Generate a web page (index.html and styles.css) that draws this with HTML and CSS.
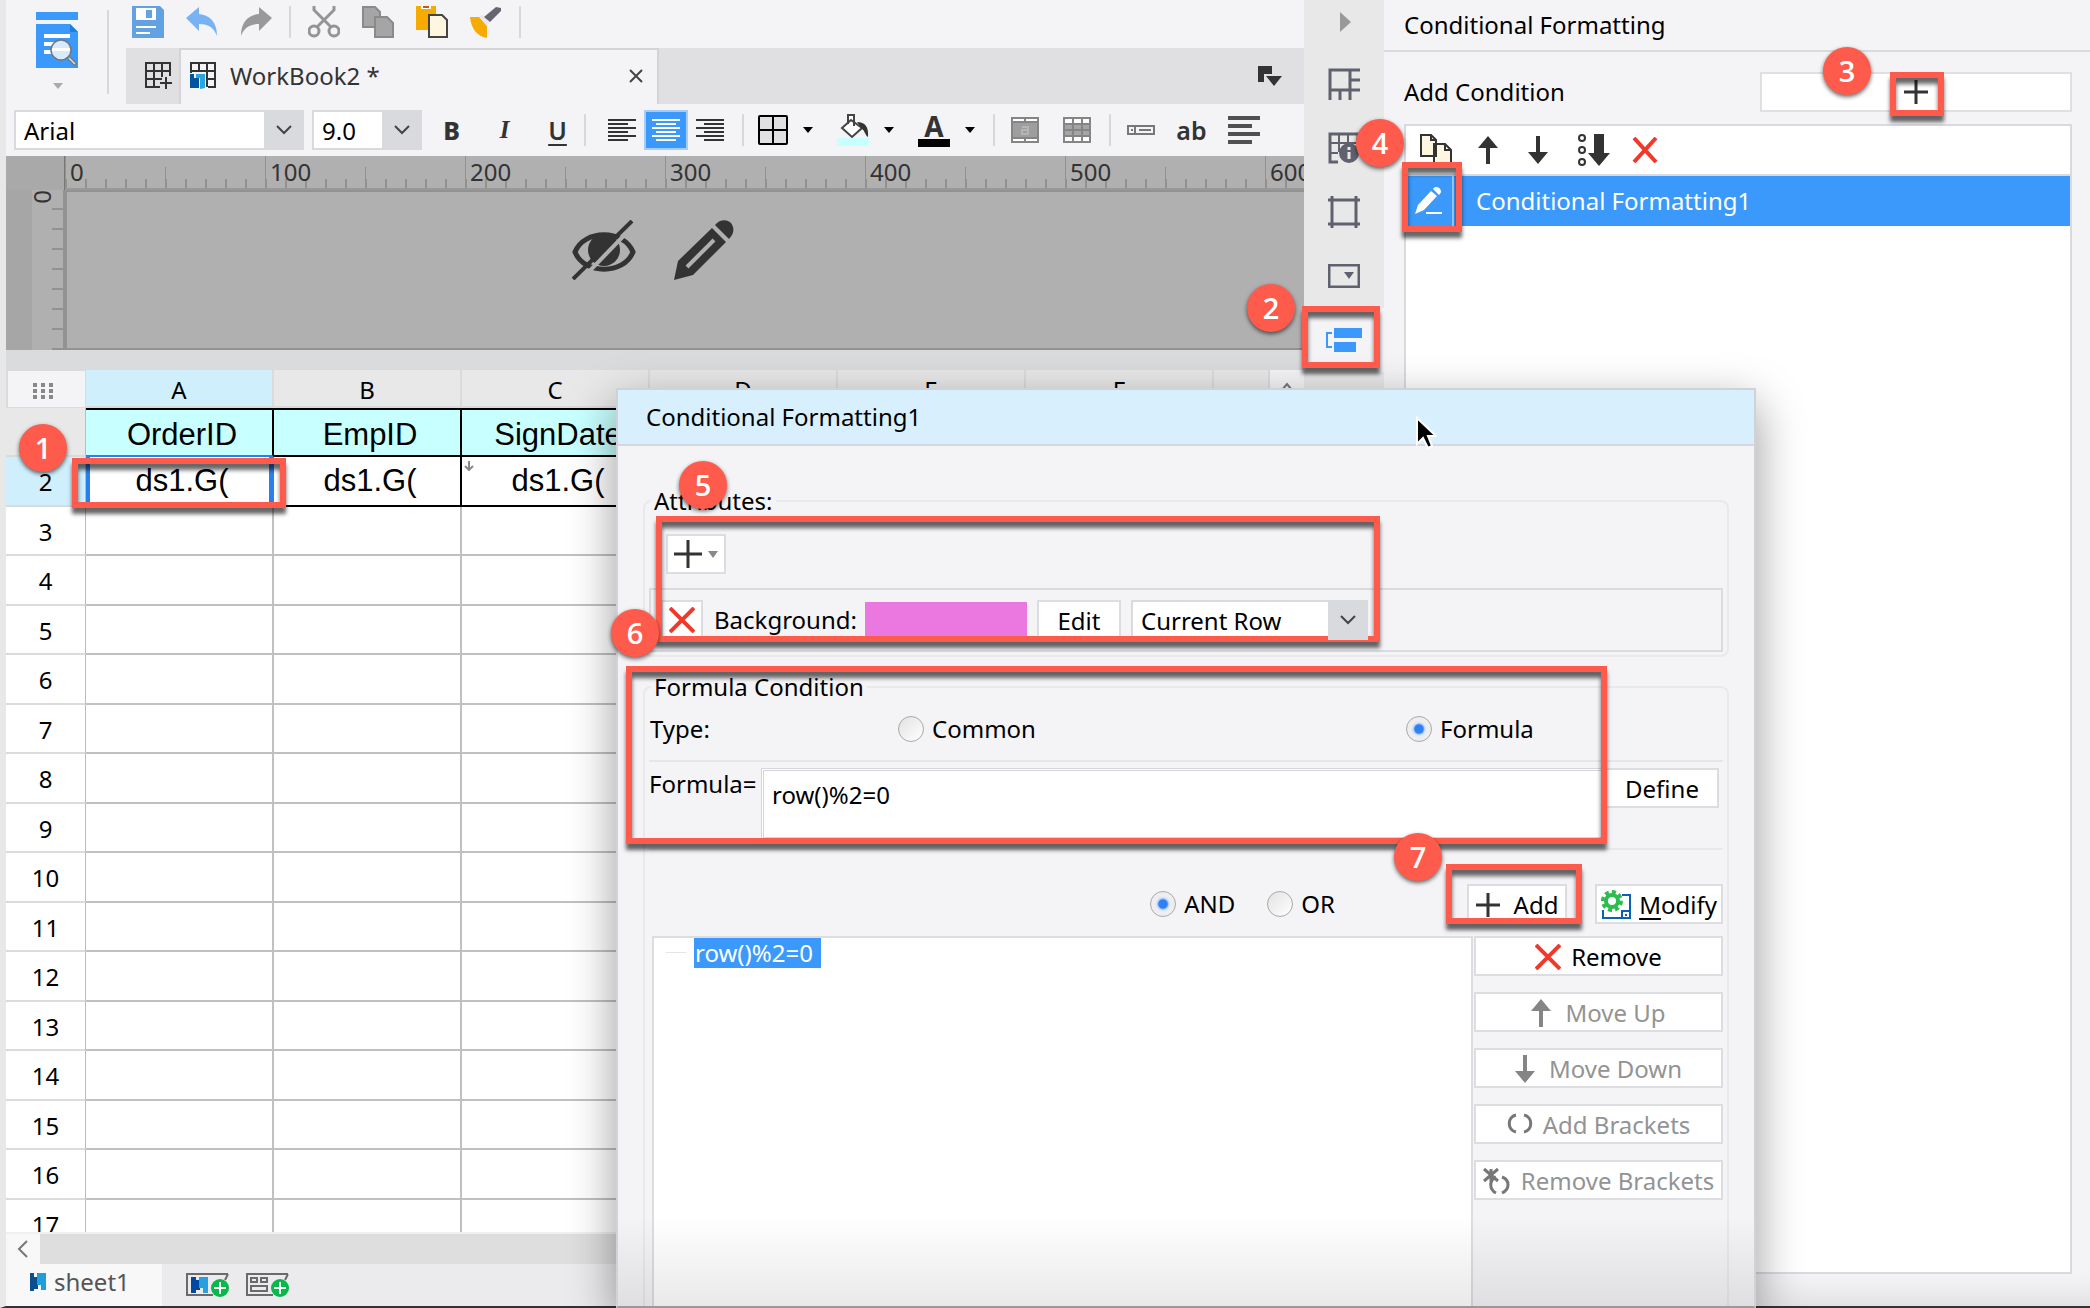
FILE: index.html
```html
<!DOCTYPE html>
<html lang="en">
<head>
<meta charset="utf-8">
<title>WorkBook2 - Conditional Formatting</title>
<link rel="stylesheet" href="styles.css">
</head>
<body>
<div class="app">
  <main class="designer">
    <header class="toolbar">
      <button class="preview" aria-label="Preview">
        <svg width="42" height="78" viewBox="0 0 42 78"><path fill="#3b99fc" d="M0 0h42v8H0zM0 12h34l8 8v36H0z"/><path fill="#1c7fe0" d="M34 12l8 8h-8z"/><path fill="#fff" d="M8 22h26v4H8zM8 30h12v4H8zM8 38h12v4H8z"/><circle cx="25" cy="38" r="10" fill="#d8eafd" stroke="#777" stroke-width="1.5"/><path d="M16 36h18v3H16z" fill="#fff"/><path stroke="#777" stroke-width="4" d="M33 46l7 7"/><path stroke="#ddd" stroke-width="1.5" d="M33 46l6 6"/><path fill="#aaa" d="M17 71h10l-5 6z"/></svg>
      </button>
      <span class="rule rule-tall"></span>
      <div class="toolbar-main">
        <div class="quick">
          <button aria-label="Save"><svg width="32" height="32"><path fill="#62a1e2" d="M0 0h28l4 4v28H0z"/><path fill="#fff" d="M4 2h20v12H4zM4 20h20v2H4zM4 26h14v2H4z"/><path fill="#62a1e2" d="M14 4h6v8h-6z"/></svg></button>
          <button aria-label="Undo"><svg width="32" height="32"><path fill="#78b2f2" d="M0 12L13 1v7c11 1 18 8 18 22-3-8-8-12-18-12v7z"/></svg></button>
          <button aria-label="Redo"><svg width="32" height="32"><path fill="#999" d="M32 12L19 1v7C8 9 1 16 1 30c3-8 8-12 18-12v7z"/></svg></button>
          <span class="rule"></span>
          <button aria-label="Cut"><svg width="32" height="32" fill="none" stroke="#949494" stroke-width="3"><circle cx="6" cy="25" r="5"/><circle cx="26" cy="25" r="5"/><path d="M6 0v4l17 17M26 0v4L9 21"/></svg></button>
          <button aria-label="Copy"><svg width="32" height="32"><path fill="#a5a5a5" stroke="#8a8a8a" stroke-width="2" d="M1 1h12l5 5v15H1z"/><path fill="#a5a5a5" stroke="#8a8a8a" stroke-width="2" d="M13 11h12l6 6v14H13z"/></svg></button>
          <button aria-label="Paste"><svg width="32" height="32"><path fill="#f7ab00" d="M0 0h20v24H0z"/><path fill="#fff" d="M5 0h10v3H5z"/><path fill="#c55a11" d="M7 0h6v2H7z"/><path fill="#fff6e0" stroke="#444" stroke-width="2" d="M13 9h13l5 5v17H13z"/></svg></button>
          <button aria-label="Format painter"><svg width="32" height="32"><path fill="#f7ab00" d="M0 11h9l8 9v12c-9-1-16-9-17-21z"/><path fill="#e9e9ec" d="M9 10l4-1 7 8-3 3z"/><path fill="#666673" d="M14 11L26 1l5 1v3L20 16z"/></svg></button>
          <span class="rule"></span>
        </div>
        <nav class="tabs">
          <button class="new-tab" aria-label="New workbook"><svg width="28" height="28" fill="none" stroke="#333" stroke-width="2"><path d="M25 14V1H1v24h14M1 9h24M1 17h16M9 1v24M17 1v14M21 15v12M15 21h12"/></svg></button>
          <a class="tab" href="#workbook2">
            <svg width="28" height="28"><path fill="none" stroke="#333" stroke-width="2" d="M1 11V1h24v24h-7M1 9h24M9 1v9M17 1v24M17 17h8"/><path fill="#0054a0" d="M0 12h4v4h5v10H0z"/><path fill="#2aa5e0" d="M6 12h9v14l-5 1V16H6z"/></svg>
            <span>WorkBook2 *</span>
            <svg class="tab-close" width="16" height="16" stroke="#444" stroke-width="2"><path d="M2 2l12 12M14 2L2 14"/></svg>
          </a>
          <div class="tab-rest"><button aria-label="Tab list"><svg width="24" height="20" fill="#333"><path d="M0 0h14v8H6v8H0zM8 10h16l-8 10z"/></svg></button></div>
        </nav>
      </div>
    </header>

    <div class="format">
      <label class="combo combo-font"><select aria-label="Font"><option>Arial</option></select><span class="chev"><svg width="16" height="10" fill="none" stroke="#444" stroke-width="2"><path d="M1 1l7 7 7-7"/></svg></span></label>
      <label class="combo combo-size"><select aria-label="Font size"><option>9.0</option></select><span class="chev"><svg width="16" height="10" fill="none" stroke="#444" stroke-width="2"><path d="M1 1l7 7 7-7"/></svg></span></label>
      <button class="glyph bold">B</button>
      <button class="glyph italic">I</button>
      <button class="glyph under">U</button>
      <span class="rule"></span>
      <div class="aligns">
        <button aria-label="Align left"><svg width="28" height="22" fill="#333"><path d="M0 0h28v2H0zM0 4h20v2H0zM0 8h28v2H0zM0 12h20v2H0zM0 16h28v2H0zM0 20h20v2H0z"/></svg></button>
        <button class="on" aria-label="Align center"><svg width="28" height="22" fill="#fff"><path d="M0 0h28v2H0zM4 4h20v2H4zM0 8h28v2H0zM4 12h20v2H4zM0 16h28v2H0zM4 20h20v2H4z"/></svg></button>
        <button aria-label="Align right"><svg width="28" height="22" fill="#333"><path d="M0 0h28v2H0zM8 4h20v2H8zM0 8h28v2H0zM8 12h20v2H8zM0 16h28v2H0zM8 20h20v2H8z"/></svg></button>
      </div>
      <span class="rule"></span>
      <div class="pickers">
        <button aria-label="Border"><svg width="30" height="30"><rect x="1" y="1" width="28" height="28" rx="1" fill="#e0e0e2" stroke="#000" stroke-width="2"/><path stroke="#000" stroke-width="2" d="M15 1v28M1 15h28"/></svg><svg class="caret" width="10" height="6"><path d="M0 0h10L5 6z"/></svg></button>
        <button aria-label="Fill color"><svg width="32" height="32"><path fill="#c8ffff" d="M0 24h32v8H0z"/><path fill="#fff" stroke="#444" stroke-width="2" d="M14 6l11 8-10 9-10-9zM11 10V1h6v11"/><path fill="#333" d="M20 8c8 0 12 5 11 15-3-2-3-6-6-8z"/></svg><svg class="caret" width="10" height="6"><path d="M0 0h10L5 6z"/></svg></button>
        <button aria-label="Font color"><span class="font-color">A</span><svg class="caret" width="10" height="6"><path d="M0 0h10L5 6z"/></svg></button>
      </div>
      <span class="rule"></span>
      <div class="cells">
        <button aria-label="Merge cells"><svg width="28" height="26"><path fill="#858585" d="M0 0h28v26H0z"/><path fill="#fff" d="M2 2h11v2H2zM15 2h11v2H15zM2 22h11v2H2zM15 22h11v2H15z"/><path fill="#9e9e9e" d="M2 6h24v14H2z"/><path d="M11 10h6v7h-6v-4h5" fill="none" stroke="#b5b5b5" stroke-width="2"/></svg></button>
        <button aria-label="Split cells"><svg width="28" height="26"><path fill="#858585" d="M0 0h28v26H0z"/><path fill="#fff" d="M2 2h7v4H2zM11 2h7v4h-7zM20 2h6v4h-6zM2 20h7v4H2zM11 20h7v4h-7zM20 20h6v4h-6z"/><path fill="#a5a5a5" d="M2 8h7v4H2zM11 8h7v4h-7zM20 8h6v4h-6zM2 14h7v4H2zM11 14h7v4h-7zM20 14h6v4h-6z"/></svg></button>
      </div>
      <span class="rule"></span>
      <div class="extras">
        <button aria-label="Text field"><svg width="28" height="10" fill="none" stroke="#777" stroke-width="2"><path d="M1 1h26v8H1zM8 1v8M12 5h12M4 5h2"/></svg></button>
        <button class="glyph ab">ab</button>
        <button aria-label="Paragraph"><svg width="32" height="28" fill="#505050"><path d="M0 0h32v4H0zM0 8h24v4H0zM0 16h32v4H0zM0 24h24v4H0z"/></svg></button>
      </div>
    </div>

    <section class="canvas">
      <div class="ruler-corner"></div>
      <div class="ruler-x"><span>0</span><span>100</span><span>200</span><span>300</span><span>400</span><span>500</span><span>600</span></div>
      <div class="ruler-y"><span>0</span></div>
      <div class="stage">
        <svg width="64" height="60" viewBox="0 0 64 60"><path fill="none" stroke="#333" stroke-width="5" d="M3 32C12 9 52 9 61 32 52 55 12 55 3 32z"/><circle cx="32" cy="30" r="16" fill="#333"/><path fill="none" stroke="#b0b0b0" stroke-width="4" d="M64 3L6 63"/><path fill="none" stroke="#333" stroke-width="4" d="M60 1L1 59"/></svg>
        <svg width="60" height="60" viewBox="0 0 60 60"><path fill="#333" d="M0 60l4-19L38 8l14 14-33 33zM41 5c6-7 13-5 16-2 3 4 4 10-2 16z"/><path stroke="#b0b0b0" stroke-width="4" d="M13 47l27-27"/></svg>
      </div>
    </section>

    <section class="sheet">
      <table class="grid">
        <thead><tr><th class="corner"><svg width="22" height="16" fill="#888"><path d="M0 0h4v4H0zM8 0h4v4H8zM16 0h4v4h-4zM0 6h4v4H0zM8 6h4v4H8zM16 6h4v4h-4zM0 12h4v4H0zM8 12h4v4H8zM16 12h4v4h-4z"/></svg></th><th class="active">A</th><th>B</th><th>C</th><th>D</th><th>E</th><th>F</th><th></th></tr></thead>
        <tbody>
          <tr class="head"><th></th><td>OrderID</td><td>EmpID</td><td>SignDate</td><td></td><td></td><td></td><td></td></tr>
          <tr class="data"><th class="active">2</th><td class="selected">ds1.G(</td><td>ds1.G(</td><td class="expand">ds1.G(<svg width="10" height="10" fill="none" stroke="#888" stroke-width="2"><path d="M5 0v8M1 5l4 4 4-4"/></svg></td><td></td><td></td><td></td><td></td></tr>
          <tr><th>3</th><td></td><td></td><td></td><td></td><td></td><td></td><td></td></tr>
          <tr><th>4</th><td></td><td></td><td></td><td></td><td></td><td></td><td></td></tr>
          <tr><th>5</th><td></td><td></td><td></td><td></td><td></td><td></td><td></td></tr>
          <tr><th>6</th><td></td><td></td><td></td><td></td><td></td><td></td><td></td></tr>
          <tr><th>7</th><td></td><td></td><td></td><td></td><td></td><td></td><td></td></tr>
          <tr><th>8</th><td></td><td></td><td></td><td></td><td></td><td></td><td></td></tr>
          <tr><th>9</th><td></td><td></td><td></td><td></td><td></td><td></td><td></td></tr>
          <tr><th>10</th><td></td><td></td><td></td><td></td><td></td><td></td><td></td></tr>
          <tr><th>11</th><td></td><td></td><td></td><td></td><td></td><td></td><td></td></tr>
          <tr><th>12</th><td></td><td></td><td></td><td></td><td></td><td></td><td></td></tr>
          <tr><th>13</th><td></td><td></td><td></td><td></td><td></td><td></td><td></td></tr>
          <tr><th>14</th><td></td><td></td><td></td><td></td><td></td><td></td><td></td></tr>
          <tr><th>15</th><td></td><td></td><td></td><td></td><td></td><td></td><td></td></tr>
          <tr><th>16</th><td></td><td></td><td></td><td></td><td></td><td></td><td></td></tr>
          <tr><th>17</th><td></td><td></td><td></td><td></td><td></td><td></td><td></td></tr>
        </tbody>
      </table>
      <div class="vscroll"><svg width="12" height="10" fill="none" stroke="#777" stroke-width="2"><path d="M1 8l5-6 5 6"/></svg></div>
    </section>
    <div class="hscroll"><button aria-label="Scroll left"><svg width="12" height="18" fill="none" stroke="#777" stroke-width="2"><path d="M10 1L2 9l8 8"/></svg></button></div>
    <footer class="sheets">
      <a class="sheet-tab" href="#sheet1"><svg width="16" height="18"><path fill="#0a4f8f" d="M0 0h4v4h4v12H4v2H0z"/><path fill="#1e9fd8" d="M7 0h9v17h-5v-5H7z"/></svg>sheet1</a>
      <button aria-label="Add sheet"><svg width="44" height="24"><path fill="none" stroke="#6a6a6a" stroke-width="2" d="M42 1H1v21h26M42 1l-3 6"/><path fill="#0048a0" d="M5 4h5v3h4v10h-4v3H5z"/><path fill="#2a9fe0" d="M13 4h9v16h-5v-5h-4z"/><circle cx="34" cy="15" r="9" fill="#07b84a"/><path stroke="#fff" stroke-width="2" d="M28 15h12M34 9v12"/></svg></button>
      <button aria-label="Add form"><svg width="44" height="24"><path fill="none" stroke="#6a6a6a" stroke-width="2" d="M42 1H1v21h26M42 1l-3 6M5 5h6v4H5zM15 5h6v4h-6zM5 13h16v5H5z"/><circle cx="34" cy="15" r="9" fill="#07b84a"/><path stroke="#fff" stroke-width="2" d="M28 15h12M34 9v12"/></svg></button>
      <svg class="sheet-prev" width="8" height="14" fill="#888"><path d="M8 0v14L0 7z"/></svg>
    </footer>
  </main>

  <nav class="rail">
    <button class="rail-fold" aria-label="Collapse"><svg width="12" height="20" fill="#999"><path d="M0 0l11 10L0 20z"/></svg></button>
    <button aria-label="Cell element"><svg width="32" height="32" fill="none" stroke="#5f626e" stroke-width="3"><path d="M32 2H2v30M22 2v30M2 22h30M22 12h10M12 22v10"/></svg></button>
    <button aria-label="Cell attributes"><svg width="32" height="32" fill="none" stroke="#5f626e" stroke-width="2"><path stroke-width="3" d="M30 12V2H2v28h8"/><path d="M2 11h26M2 21h8M11 2v18M20 2v10"/><circle cx="21" cy="21" r="9" fill="#5f626e"/><path stroke="#e8e8e8" stroke-width="3" d="M21 15v3M21 20v7"/></svg></button>
    <button aria-label="Float element"><svg width="32" height="32" fill="none" stroke="#5f626e" stroke-width="3"><path d="M4 0v32M28 0v32M0 4h32M0 28h32"/></svg></button>
    <button aria-label="Widget"><svg width="32" height="24"><path fill="none" stroke="#5f626e" stroke-width="3" d="M1 1h30v22H1z"/><path fill="#5f626e" d="M16 8h10l-5 7z"/></svg></button>
    <button class="on" aria-label="Conditional formatting"><svg width="36" height="24" fill="#3b99fc"><path d="M8 0h28v10H8zM8 14h22v10H8z"/><path fill="none" stroke="#3b99fc" stroke-width="2" d="M6 5H1v14h5"/></svg></button>
  </nav>

  <aside class="panel">
    <h2>Conditional Formatting</h2>
    <div class="add-row"><span>Add Condition</span><button aria-label="Add condition"><svg width="24" height="24" stroke="#333" stroke-width="3"><path d="M12 0v24M0 12h24"/></svg></button></div>
    <div class="conditions">
      <div class="cond-tools">
        <button aria-label="Copy"><svg width="34" height="32" fill="#fff6e0" stroke="#333" stroke-width="2"><path d="M1 1h10l5 5v16H1zM11 1v5h5M14 10h11l6 6v15H14zM25 10v6h6"/></svg></button>
        <button aria-label="Up"><svg width="20" height="28" fill="#333"><path d="M10 0l10 12h-8v16H8V12H0z"/></svg></button>
        <button aria-label="Down"><svg width="20" height="28" fill="#333"><path d="M10 28L0 16h8V0h4v16h8z"/></svg></button>
        <button aria-label="Sort"><svg width="32" height="32"><g fill="none" stroke="#333" stroke-width="2"><circle cx="4" cy="4" r="3"/><circle cx="4" cy="16" r="3"/><circle cx="4" cy="28" r="3"/></g><path fill="#333" d="M16 0h10v19h6L21 32 10 19h6z"/></svg></button>
        <button aria-label="Delete"><svg width="26" height="26" stroke="#f0392b" stroke-width="4"><path d="M2 1l22 24M24 1L2 25"/></svg></button>
      </div>
      <div class="cond-row"><button aria-label="Edit"><svg width="28" height="28" fill="#fff"><path d="M0 27l3-9L16 4l6 5L9 23zM18 2c2-3 6-2 7 0 2 2 1 4-1 6zM11 25h16v2H11z"/></svg></button><span>Conditional Formatting1</span></div>
    </div>
  </aside>
</div>

<section class="dialog" role="dialog" aria-labelledby="dialog-title">
  <h1 id="dialog-title">Conditional Formatting1</h1>
  <form class="dialog-body">
    <fieldset class="attributes">
      <legend>Attributes:</legend>
      <button type="button" class="btn add-attr" aria-label="Add attribute"><svg width="28" height="28" stroke="#333" stroke-width="3"><path d="M14 0v28M0 14h28"/></svg><svg width="10" height="7" fill="#888"><path d="M0 0h10L5 7z"/></svg></button>
      <div class="attr-list">
        <button type="button" class="btn drop" aria-label="Remove attribute"><svg width="26" height="26" stroke="#f0392b" stroke-width="4"><path d="M1 1l24 24M25 1L1 25"/></svg></button>
        <span class="attr-name">Background:</span>
        <span class="swatch"></span>
        <button type="button" class="btn edit">Edit</button>
        <label class="combo combo-scope"><select aria-label="Scope"><option>Current Row</option></select><span class="chev"><svg width="16" height="10" fill="none" stroke="#444" stroke-width="2"><path d="M1 1l7 7 7-7"/></svg></span></label>
      </div>
    </fieldset>

    <fieldset class="formula">
      <legend>Formula Condition</legend>
      <div class="type-row">
        <span>Type:</span>
        <label><input type="radio" name="type">Common</label>
        <label><input type="radio" name="type" checked>Formula</label>
      </div>
      <div class="formula-row">
        <label for="expr">Formula=</label>
        <textarea id="expr">row()%2=0</textarea>
        <button type="button" class="btn define">Define</button>
      </div>
      <div class="join-row">
        <label><input type="radio" name="join" checked>AND</label>
        <label><input type="radio" name="join">OR</label>
        <button type="button" class="btn add"><svg width="24" height="24" stroke="#333" stroke-width="3"><path d="M12 0v24M0 12h24"/></svg><span><u>A</u>dd</span></button>
        <button type="button" class="btn modify"><svg width="30" height="30" fill="none"><path stroke="#0a62b8" stroke-width="2" d="M2 20v8h27V5h-8"/><path stroke="#0a62b8" stroke-width="2" d="M21 28v-7h8M24 25h2"/><circle cx="11" cy="11" r="6" stroke="#2dbd4f" stroke-width="4"/><circle cx="11" cy="11" r="9" stroke="#2dbd4f" stroke-width="4" stroke-dasharray="4 3"/></svg><span><u>M</u>odify</span></button>
      </div>
      <div class="tree-row">
        <div class="tree"><span class="node">row()%2=0</span></div>
        <div class="side">
          <button type="button" class="btn"><svg width="26" height="26" stroke="#f0392b" stroke-width="4"><path d="M1 1l24 24M25 1L1 25"/></svg>Remove</button>
          <button type="button" class="btn" disabled><svg width="24" height="28" fill="#858585"><path d="M10 0l10 12h-8v16H8V12H0z"/></svg>Move Up</button>
          <button type="button" class="btn" disabled><svg width="24" height="28" fill="#858585"><path d="M10 28L0 16h8V0h4v16h8z"/></svg>Move Down</button>
          <button type="button" class="btn" disabled><svg width="26" height="28" fill="none" stroke="#777" stroke-width="3"><path d="M9 4C0 6 0 19 9 21M17 4c9 2 9 15 0 17"/></svg>Add Brackets</button>
          <button type="button" class="btn" disabled><svg width="28" height="28" fill="none" stroke="#777" stroke-width="3"><path d="M1 2l14 12M15 2L1 14M8 2v12M13 10c-7 3-7 12 0 16M19 10c8 3 8 12 0 16"/></svg>Remove Brackets</button>
        </div>
      </div>
    </fieldset>
  </form>
</section>
<svg class="pointer" width="22" height="34"><path fill="#000" stroke="#fff" stroke-width="2" d="M2 2v26l6-6 5 10 4-2-4-10h8z"/></svg>

<div class="mark mark-1"></div><b class="step step-1">1</b>
<div class="mark mark-2"></div><b class="step step-2">2</b>
<div class="mark mark-3"></div><b class="step step-3">3</b>
<div class="mark mark-4"></div><b class="step step-4">4</b>
<div class="mark mark-5"></div><b class="step step-5">5</b>
<div class="mark mark-6"></div><b class="step step-6">6</b>
<div class="mark mark-7"></div><b class="step step-7">7</b>
</body>
</html>
```
FILE: styles.css
```css
* { box-sizing: border-box; }
body {
  margin: 0;
  position: relative;
  height: 100vh;
  overflow: hidden;
  font: 24px/32px "Noto Sans", sans-serif;
  color: #000;
  background: #f4f4f7;
}
button { margin: 0; padding: 0; border: 0; background: none; font: inherit; color: inherit; display: flex; align-items: center; justify-content: center; }
a { color: inherit; text-decoration: none; }
svg { display: block; flex: none; }
h1, h2 { margin: 0; font: inherit; }
select, textarea { font: inherit; color: inherit; }

.app { display: flex; height: 100vh; border-left: 6px solid #e8e8e8; border-bottom: 2px solid #333; }
.designer { flex: 1; min-width: 0; display: flex; flex-direction: column; overflow: hidden; }

/* top toolbar and workbook tabs */
.toolbar { display: flex; height: 104px; }
.preview { width: 101px; align-items: flex-start; padding-top: 12px; }
.rule { width: 2px; height: 32px; background: #d8d8dc; flex: none; }
.rule-tall { height: 84px; margin-top: 10px; }
.toolbar-main { flex: 1; margin-left: 17px; }
.quick { display: flex; align-items: flex-start; gap: 22px; height: 48px; padding: 6px 0 0 6px; }
.quick .rule { margin: 0 -5px; }
.tabs { display: flex; height: 56px; }
.new-tab { width: 53px; padding-left: 12px; background: #e0e0e2; }
.tab { display: flex; align-items: center; width: 480px; padding: 0 13px 2px 9px; gap: 12px; color: #333; border: 2px solid #d4d4d8; border-bottom: 0; }
.tab-close { margin-left: auto; }
.tab-rest { flex: 1; display: flex; justify-content: flex-end; padding-right: 22px; background: #e0e0e2; }

/* format bar */
.format { display: flex; align-items: center; height: 52px; padding-left: 8px; }
.combo { display: grid; grid-template: 40px / 1fr 40px; align-items: stretch; gap: 0; height: 40px; }
.combo select { grid-area: 1 / 1 / 2 / 3; appearance: none; border: 2px solid #d9dadd; border-radius: 0; background: #fff; padding: 2px 8px 0; outline: 0; }
.chev { grid-area: 1 / 2 / 2 / 3; z-index: 1; display: grid; place-items: center; background: #d9dadd; pointer-events: none; }
.combo-font { width: 290px; }
.combo-size { width: 110px; margin-left: 8px; }
.glyph { width: 53px; color: #333; font-size: 25px; }
.bold { font-weight: 800; margin-left: 3px; }
.italic { font: italic bold 25px "Liberation Serif", serif; }
.under { font-weight: 600; text-decoration: underline; text-underline-offset: 4px; }
.aligns { display: flex; padding: 0 10px 0 14px; }
.aligns button { width: 44px; height: 40px; }
.aligns .on { background: #3b99fc; border: 2px solid #a8cdf5; }
.pickers { display: flex; gap: 24px; padding: 0 18px 0 14px; }
.pickers button { gap: 15px; }
.font-color { width: 32px; height: 34px; border-bottom: 8px solid #000; font: bold 28px/26px "Noto Sans", sans-serif; color: #333; }
.cells { display: flex; gap: 24px; padding: 0 18px 0 16px; }
.extras { display: flex; padding-left: 16px; gap: 10px; }
.ab { font-weight: 600; }

/* report canvas with rulers */
.canvas { display: grid; grid-template: 34px 160px / 59px 1fr; background: #b0b0b0; border-bottom: 0; }
.ruler-corner { background: #a9a9a9; border-right: 1px solid #777; }
.ruler-x {
  display: flex; overflow: hidden; color: #333; border-bottom: 2px solid #999;
  background:
    repeating-linear-gradient(90deg, #919191 0 1px, transparent 1px 200px) 0 0 / 100% 100%,
    repeating-linear-gradient(90deg, #919191 0 1px, transparent 1px 100px) 0 11px / 100% 21px no-repeat,
    repeating-linear-gradient(90deg, #919191 0 2px, transparent 2px 20px) 0 23px / 100% 9px no-repeat;
}
.ruler-x span { flex: none; width: 200px; padding-left: 5px; }
.ruler-y {
  border-left: 26px solid #a6a6a6; border-right: 2px solid #929292; color: #333;
  background: repeating-linear-gradient(transparent 0 18px, #929292 18px 20px) right 0 / 11px 100% no-repeat;
}
.ruler-y span { display: block; writing-mode: vertical-lr; height: 16px; line-height: 22px; }
.stage { display: flex; gap: 38px; padding: 28px 0 0 505px; border: 2px solid #929292; border-right: 0; }

/* spreadsheet */
.sheet { flex: 1; min-height: 0; position: relative; display: flex; overflow: hidden; border-top: 20px solid #dadbdd; background: #fff; }
.grid { flex: none; width: 1264px; table-layout: fixed; border-collapse: separate; border-spacing: 0; align-self: flex-start; }
.grid th, .grid td { padding: 0; overflow: hidden; font-weight: 400; text-align: center; border-right: 2px solid #c0c0c0; border-bottom: 2px solid #c0c0c0; }
.grid thead th { height: 38px; padding-top: 4px; background: #e8e8e8; border-color: #dadbdd; }
.grid thead .corner { width: 80px; padding-right: 6px; background: #f4f4f7; border: 1px solid #dadbdd; border-left-width: 2px; }
.grid th:nth-child(n+2) { width: 188px; }
.grid thead th:last-child { width: 56px; }
.corner svg { margin: 0 auto; }
.grid tbody tr { height: 49px; }
.grid tbody tr:nth-child(even) { height: 50px; }
.grid tbody th { padding-top: 2px; border-color: #dadbdd; border-right-width: 1px; border-right-color: #bbb; }
.grid .head th { background: #e8e8e8; }
.grid thead .active, .grid tbody .active { background: #cfeffc; }
.grid td { font: 31px/40px "Liberation Sans", sans-serif; padding-left: 6px; }
.grid .head td { padding-top: 6px; background: #c8ffff; border-color: #000; box-shadow: inset 0 2px #000; }
.grid .data td { border-color: #000; }
.grid .data .selected { box-shadow: inset 4px 0 #2a7ff0, inset -3px 0 #2a7ff0; border-right-color: #2a7ff0; border-bottom-color: #174a94; }
.grid .head td:nth-child(2) { border-bottom-color: #2a7ff0; }
.expand { position: relative; }
.expand svg { position: absolute; left: 2px; top: 4px; }
.vscroll { flex: 1; display: flex; justify-content: center; padding-top: 12px; background: #f4f4f7; }
.hscroll { height: 32px; padding-top: 2px; background: #dedede; border-top: 2px solid #f0f0f0; }
.hscroll button { width: 34px; height: 30px; margin-top: -2px; background: #f8f8f8; }
.sheets { display: flex; align-items: center; gap: 16px; height: 42px; background: #ebebed; color: #555; }
.sheet-tab { display: flex; align-items: center; gap: 8px; width: 156px; height: 42px; padding: 0 0 6px 24px; background: #f8f8f8; margin-right: 8px; }
.sheet-prev { margin-left: 315px; }

/* icon rail */
.rail { width: 80px; flex: none; background: #e8e8e8; }
.rail button { width: 80px; height: 64px; }
.rail .rail-fold { height: 52px; padding: 0 0 8px 4px; }
.rail .on { background: #f4f4f7; }

/* property panel */
.panel { width: 706px; flex: none; display: flex; flex-direction: column; padding-bottom: 32px; box-shadow: inset 0 -40px 30px -30px #00000018; }
.panel h2 { height: 52px; padding: 9px 20px; border-bottom: 2px solid #dadbdf; }
.add-row { display: flex; align-items: center; justify-content: space-between; height: 40px; margin: 20px 18px 12px 20px; }
.add-row button { width: 312px; height: 40px; padding: 0; background: #fff; border: 2px solid #e0e0e4; }
.conditions { flex: 1; margin: 0 18px 0 20px; background: #fff; border: 2px solid #d9dadf; }
.cond-tools { display: flex; align-items: center; gap: 30px; height: 50px; padding-left: 14px; border-bottom: 2px solid #d9dadf; }
.cond-tools button:first-child { margin-right: -6px; }
.cond-tools button:last-child { margin-left: -8px; }
.cond-row { display: flex; align-items: center; height: 50px; color: #fff; background: #3b99fc; gap: 22px; }
.cond-row button { width: 48px; height: 50px; border-right: 2px solid #9cccff; }

/* condition dialog */
.dialog { position: absolute; left: 616px; top: 388px; bottom: 0; width: 1140px; background: #f4f4f7; border: 2px solid #cfd3d8; border-bottom: 2px solid #999; box-shadow: 0 16px 44px #0006; }
.dialog::after { content: ""; position: absolute; inset: auto 0 0; height: 90px; background: linear-gradient(transparent, #00000016); pointer-events: none; }
.dialog h1 { height: 56px; padding: 11px 28px; background: #d8f0fe; border-bottom: 2px solid #d4d8de; }
.dialog-body { display: flex; flex-direction: column; height: calc(100% - 56px); padding: 39px 25px 0; overflow: hidden; }
fieldset { min-width: 0; margin: 0; padding: 0 4px; border: 2px solid #e9e9ec; border-radius: 8px; }
legend { margin-left: 2px; padding: 0 3px; }
.btn { height: 40px; padding: 2px 0 0; background: #fff; border: 2px solid #dcdde0; }
.attributes { height: 172px; }
.add-attr { width: 60px; margin: 17px 0 14px 17px; padding: 0; gap: 6px; }
.attr-list { display: flex; align-items: flex-end; height: 64px; padding: 0 0 10px 10px; border: 2px solid #dadbdf; }
.drop { width: 42px; padding: 0; }
.attr-name { padding: 0 8px 4px 11px; }
.swatch { width: 162px; height: 38px; background: #eb77e0; }
.edit { width: 84px; margin: 0 10px; }
.combo-scope { width: 237px; }
.formula { flex: 1; display: flex; flex-direction: column; margin-top: 14px; border-bottom: 0; border-radius: 8px 8px 0 0; }
label { display: flex; align-items: center; gap: 8px; }
input[type=radio] { appearance: none; width: 26px; height: 26px; margin: 0; border: 1px solid #a9a9a9; border-radius: 50%; background: linear-gradient(135deg, #e2e2e2, #fff); }
input[type=radio]:checked { background: radial-gradient(circle, #2f80f5 0 4px, #cfe2fb 6px, #eee 8px); }
.type-row { display: grid; grid-template-columns: 248px 508px 1fr; height: 59px; padding: 10px 0 16px 1px; border-bottom: 2px solid #e6e6e9; }
.formula-row { display: flex; align-items: flex-start; height: 88px; padding-top: 6px; border-bottom: 2px solid #e9e9ec; }
.formula-row label { width: 112px; }
.formula-row textarea { flex: 1; height: 72px; padding: 8px; border: 3px double #d5d6da; border-radius: 0; background: #fff; resize: none; outline: 0; }
.define { width: 114px; margin-right: 4px; }
.join-row { display: flex; align-items: center; justify-content: flex-end; height: 86px; padding-top: 22px; }
.join-row label { margin-right: 32px; }
.join-row .add { width: 100px; margin: 0 28px 0 100px; gap: 14px; }
.join-row .modify { width: 128px; gap: 8px; }
u { text-underline-offset: 4px; }
.tree-row { flex: 1; display: flex; gap: 1px; margin-left: 3px; }
.tree { flex: 1; padding-left: 12px; display: flex; align-items: flex-start; background: #fff; border: 2px solid #dcdde0; border-bottom: 0; }
.tree::before { content: ""; width: 20px; margin: 14px 8px 0 0; border-top: 1px solid #e4e4e4; }
.node { color: #fff; background: #3b99fc; height: 30px; line-height: 30px; padding: 0 8px 0 1px; }
.side { display: grid; align-content: start; gap: 16px; width: 249px; }
.side .btn { gap: 10px; }
.side .btn:disabled { color: #939393; }

.pointer { position: absolute; left: 1415px; top: 416px; }

/* numbered walkthrough marks */
.mark { position: absolute; border: 6px solid #ff5b4c; box-shadow: 0 6px 4px #0009, inset 0 6px 4px #0009; pointer-events: none; }
.mark-1 { left: 72px; top: 458px; width: 214px; height: 50px; }
.mark-2 { left: 1302px; top: 306px; width: 78px; height: 62px; }
.mark-3 { left: 1890px; top: 72px; width: 54px; height: 44px; }
.mark-4 { left: 1402px; top: 162px; width: 60px; height: 70px; }
.mark-5 { left: 656px; top: 516px; width: 724px; height: 126px; }
.mark-6 { left: 626px; top: 666px; width: 981px; height: 178px; }
.mark-7 { left: 1446px; top: 864px; width: 136px; height: 60px; }
.step { position: absolute; width: 48px; height: 48px; border-radius: 50%; background: #ff5b4c; color: #fff; font: 600 29px/48px "Open Sans", sans-serif; text-align: center; box-shadow: 0 2px 4px #0009; }
.step-1 { left: 19px; top: 424px; }
.step-2 { left: 1247px; top: 284px; }
.step-3 { left: 1823px; top: 47px; }
.step-4 { left: 1356px; top: 119px; }
.step-5 { left: 679px; top: 461px; }
.step-6 { left: 611px; top: 609px; }
.step-7 { left: 1394px; top: 833px; }
```
